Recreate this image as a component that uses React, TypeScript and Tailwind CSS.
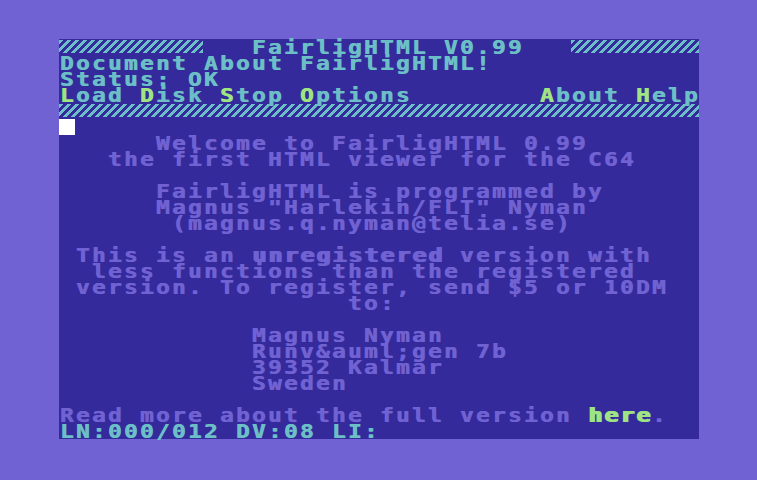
import clsx from "clsx";

type Tone = "text" | "cyan" | "green";

type Seg = { t: string; tone?: Tone; bold?: boolean };

type Cell = { ch: string; tone: Tone; bold: boolean };

const toneClass: Record<Tone, string> = {
  text: "text-[#7062d2]",
  cyan: "text-[#6cbfc6]",
  green: "text-[#9ee482]",
};

const hatchClass =
  "mt-px h-[13px] bg-[repeating-linear-gradient(135deg,#6cbfc6_0px,#6cbfc6_2.83px,#352a9c_2.83px,#352a9c_5.66px)]";

const toCells = (col: number, segs: Seg[]): Cell[] => {
  const cells: Cell[] = Array.from({ length: col }, () => ({ ch: " ", tone: "text" as Tone, bold: false }));
  segs.forEach((seg) => {
    for (const ch of seg.t) cells.push({ ch, tone: seg.tone ?? "text", bold: !!seg.bold });
  });
  return cells.slice(0, 40);
};

// every character sits in its own 16px C64 cell, glyph stretched a little to look like the C64 charset
const Cells = ({ col = 0, segs }: { col?: number; segs: Seg[] }) => (
  <>
    {toCells(col, segs).map((cell, i) => (
      <span key={i} className="flex h-4 w-4 shrink-0 justify-center">
        {cell.ch !== " " && (
          <span
            className={clsx(
              "inline-block h-4 scale-x-[1.2] leading-4",
              toneClass[cell.tone],
              cell.bold ? "[text-shadow:1.5px_0_0_currentColor]" : "[text-shadow:0.5px_0_0_currentColor]",
            )}
          >
            {cell.ch}
          </span>
        )}
      </span>
    ))}
  </>
);

const Line = ({ col = 0, segs }: { col?: number; segs: Seg[] }) => (
  <div className="flex h-4">
    <Cells col={col} segs={segs} />
  </div>
);

const Blank = () => <div className="h-4" />;

const body = (col: number, text: string) => <Line col={col} segs={[{ t: text }]} />;

export default function App() {
  return (
    <div className="flex h-[480px] w-[757px] items-start bg-[#7062d2] pl-[59px] pt-[39px]">
      <div className="flex h-[400px] w-[640px] flex-col bg-[#352a9c] font-['DejaVu_Sans_Mono',monospace] text-[19px] font-bold leading-4">
        {/* title bar */}
        <div className="flex h-4">
          <div className="h-4 w-[144px]">
            <div className={hatchClass} />
          </div>
          <Cells col={3} segs={[{ t: "FairligHTML V0.99", tone: "cyan" }]} />
          <div className="w-12" />
          <div className="h-4 w-[128px]">
            <div className={hatchClass} />
          </div>
        </div>
        <Line segs={[{ t: "Document About FairligHTML!", tone: "cyan" }]} />
        <Line segs={[{ t: "Status: OK", tone: "cyan" }]} />
        <Line
          segs={[
            { t: "L", tone: "green" },
            { t: "oad ", tone: "cyan" },
            { t: "D", tone: "green" },
            { t: "isk ", tone: "cyan" },
            { t: "S", tone: "green" },
            { t: "top ", tone: "cyan" },
            { t: "O", tone: "green" },
            { t: "ptions        ", tone: "cyan" },
            { t: "A", tone: "green" },
            { t: "bout ", tone: "cyan" },
            { t: "H", tone: "green" },
            { t: "elp", tone: "cyan" },
          ]}
        />
        <div className="h-4">
          <div className={hatchClass} />
        </div>

        {/* document */}
        <div className="h-4">
          <div className="h-4 w-4 bg-white" />
        </div>
        {body(6, "Welcome to FairligHTML 0.99")}
        {body(3, "the first HTML viewer for the C64")}
        <Blank />
        {body(6, "FairligHTML is programmed by")}
        {body(6, 'Magnus "Harlekin/FLT" Nyman')}
        {body(7, "(magnus.q.nyman@telia.se)")}
        <Blank />
        <Line col={1} segs={[{ t: "This is an " }, { t: "unregistered", bold: true }, { t: " version with" }]} />
        {body(2, "less functions than the registered")}
        {body(1, "version. To register, send $5 or 10DM")}
        {body(18, "to:")}
        <Blank />
        {body(12, "Magnus Nyman")}
        {body(12, "Runv&auml;gen 7b")}
        {body(12, "39352 Kalmar")}
        {body(12, "Sweden")}
        <Blank />
        <Line
          segs={[
            { t: "Read more about the full version " },
            { t: "here", tone: "green", bold: true },
            { t: "." },
          ]}
        />
        <Line segs={[{ t: "LN:000/012 DV:08 LI:", tone: "cyan" }]} />
      </div>
    </div>
  );
}
